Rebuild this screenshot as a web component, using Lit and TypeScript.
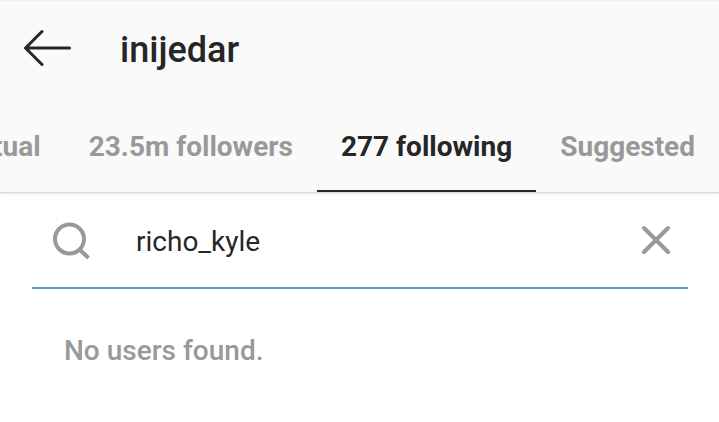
import { LitElement, html, css } from "lit";
import { customElement, property, state } from "lit/decorators.js";
import { classMap } from "lit/directives/class-map.js";

@customElement("app-root")
export class AppRoot extends LitElement {
  @property() username = "inijedar";
  @state() private active = 2;
  @state() private query = "richo_kyle";

  private tabs = ["Mutual", "23.5m followers", "277 following", "Suggested"];

  static styles = css`
    :host {
      display: block;
      min-height: 100vh;
      background: #fff;
      color: #262626;
      font-family: Roboto, sans-serif;
      overflow-x: hidden;
    }
    * {
      box-sizing: border-box;
    }
    button {
      border: 0;
      padding: 0;
      background: none;
      color: inherit;
      font: inherit;
      cursor: pointer;
    }
    svg {
      display: block;
      fill: none;
      stroke: currentColor;
    }
    .top {
      background: #fafafa;
      border-top: 1px solid #f0f0f0;
      border-bottom: 1px solid #dcdcdc;
      box-shadow: 0 1px 2px rgba(0, 0, 0, 0.1);
    }
    .bar {
      display: flex;
      align-items: center;
      gap: 48px;
      height: 96px;
      padding: 0 24px;
    }
    h1 {
      margin: 0;
      padding-top: 2px;
      font-size: 36px;
      line-height: 48px;
      font-weight: 500;
    }
    .tabs {
      display: flex;
      justify-content: flex-end;
      overflow: hidden;
    }
    .tab {
      flex: none;
      height: 95px;
      padding: 6px 24px 0;
      border-bottom: 2px solid transparent;
      color: #999;
      font-size: 28px;
      line-height: 32px;
      font-weight: 700;
      white-space: nowrap;
    }
    .tab.active {
      color: #262626;
      border-bottom-color: #262626;
    }
    .search {
      display: flex;
      align-items: center;
      height: 96px;
      margin: 0 31px 0 32px;
      padding: 0 17px 0 20px;
      border-bottom: 2px solid #5b9bc9;
      color: #999;
    }
    .search input {
      flex: 1;
      min-width: 0;
      margin-left: 44px;
      padding: 4px 0 0;
      border: 0;
      outline: 0;
      background: none;
      color: #262626;
      font: 400 28px/32px Roboto, sans-serif;
    }
    .empty {
      margin: 0;
      padding: 46px 64px;
      color: #999;
      font-size: 28px;
      line-height: 32px;
      font-weight: 500;
    }
  `;

  render() {
    return html`
      <header class="top">
        <div class="bar">
          <button aria-label="Back">
            <svg width="48" height="40" viewBox="0 0 48 40" stroke-width="3" stroke-linecap="round" stroke-linejoin="round">
              <path d="M45.500 19H1.500M18 2.500L1.500 19L18 35.500" />
            </svg>
          </button>
          <h1>${this.username}</h1>
        </div>
        <nav class="tabs" role="tablist">
          ${this.tabs.map(
            (label, i) => html`<button
              role="tab"
              aria-selected=${i === this.active}
              class=${classMap({ tab: true, active: i === this.active })}
              @click=${() => (this.active = i)}
            >${label}</button>`
          )}
        </nav>
      </header>
      <main>
        <div class="search">
          <svg width="40" height="40" viewBox="0 0 40 40" stroke-width="4">
            <circle cx="17.500" cy="19" r="14.500" />
            <path d="M27.500 29.500L36.500 38" />
          </svg>
          <input
            type="text"
            aria-label="Search"
            .value=${this.query}
            @input=${(e: InputEvent) => (this.query = (e.target as HTMLInputElement).value)}
          />
          <button aria-label="Clear search" @click=${() => (this.query = "")}>
            <svg width="30" height="30" viewBox="0 0 30 30" stroke-width="4" stroke-linecap="round">
              <path d="M3 3L27 27M27 3L3 27" />
            </svg>
          </button>
        </div>
        <p class="empty">No users found.</p>
      </main>
    `;
  }
}
